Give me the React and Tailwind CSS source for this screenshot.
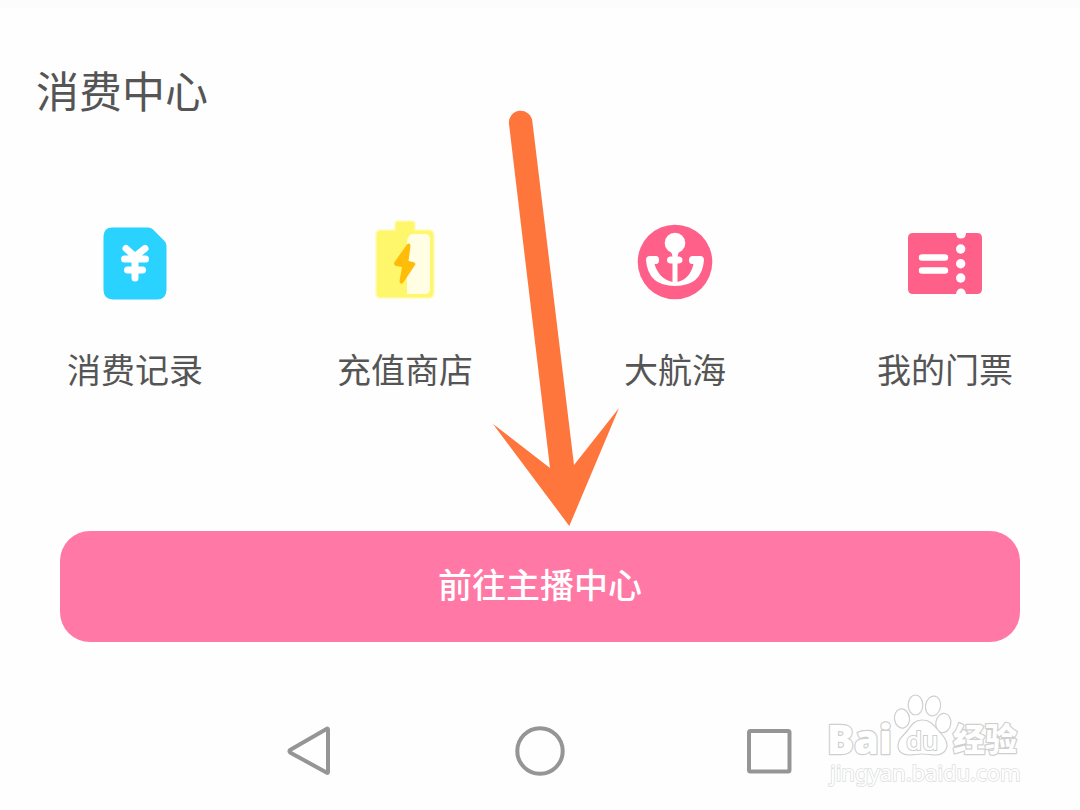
import React from "react";

function RecordIcon() {
  return (
    <svg viewBox="0 0 110 110" className="size-[110px]" aria-hidden="true">
      <path
        d="M32 22.500H68Q71 22.500 73 24.500L84.500 36Q86.500 38 86.500 41V85Q86 94.500 77 94.500H33Q23.500 94 23.500 85V31Q24 22.500 32 22.500Z"
        fill="#29d2ff"
      />
      <path
        d="M46 43.500L55 51.500L65 43.500M44.500 54H65.500M47.500 65H62.500M55 52V73"
        fill="none"
        stroke="#fff"
        strokeWidth="7"
        strokeLinecap="round"
        strokeLinejoin="round"
      />
    </svg>
  );
}

function BatteryIcon() {
  return (
    <svg viewBox="0 0 110 110" className="size-[110px]" aria-hidden="true">
      <path
        d="M48 16H62Q65 16 65 19V25H79Q84 25 84 30V87Q84 93 79 93H31Q26 93 26 88V30Q26 25 31 25H45V19Q45 16 48 16Z"
        fill="#fff76b"
        stroke="#fffbb5"
        strokeWidth="1.5"
      />
      <path d="M62 29H75Q80 29 80 34V84Q80 89 75 89H57V38Q57 31 62 29Z" fill="#fffee4" />
      <path
        d="M57 39.500L44.500 57Q43 60 46 61L52 62L49.500 76Q49.500 80 53 78L65 60Q66.500 58 63 57L58.500 56L60.500 41Q60 37 57 39.500Z"
        fill="#ffbc08"
      />
    </svg>
  );
}

function AnchorIcon() {
  return (
    <svg viewBox="0 0 110 110" className="size-[110px]" aria-hidden="true">
      <circle cx="55" cy="57" r="37.3" fill="#ff6089" />
      <circle cx="55" cy="38" r="10.3" fill="#fff" />
      <path
        d="M51 46H59L57.500 51.500H59Q62.500 52 62.500 55T59 58.500H57.500V77Q70 74 73.500 59H72Q69 59 69 55Q69 51 73 51H80Q84 51 84 55Q82 81 55 81Q28 81 26 55Q26 51 30 51H36Q39 51 39 55Q39 59 36 59H34.500Q39 74 52.500 77V58.500H50Q47 58 47 55T50 51.500H52.500Z"
        fill="#fff"
      />
    </svg>
  );
}

function TicketIcon() {
  return (
    <svg viewBox="0 0 110 110" className="size-[110px]" aria-hidden="true">
      <path
        d="M23 28H66Q66 33.500 71 33.500T76 28H87Q92 28 92 33V84Q92 89 87 89H76Q75 83.500 71 83.500T66 89H23Q18 89 18 84V33Q18 28 23 28Z"
        fill="#ff6089"
      />
      <path d="M32 52.500H55M32 65.500H55" stroke="#fff" strokeWidth="6.4" strokeLinecap="round" />
      <g fill="#fff">
        <circle cx="70.700" cy="44" r="4.700" />
        <circle cx="70.700" cy="58.700" r="4.700" />
        <circle cx="70.700" cy="73" r="4.700" />
      </g>
    </svg>
  );
}

const items = [
  { label: "消费记录", Icon: RecordIcon },
  { label: "充值商店", Icon: BatteryIcon },
  { label: "大航海", Icon: AnchorIcon },
  { label: "我的门票", Icon: TicketIcon },
];

function PointerArrow() {
  return (
    <svg
      viewBox="0 0 160 440"
      className="pointer-events-none absolute left-1/2 top-[100px] -ml-[60px] h-[440px] w-[160px]"
      aria-hidden="true"
    >
      <path
        d="M29 24A11.700 11.700 0 0 1 52.300 21L94 365L139 308L89.300 426L13 324L70 368Z"
        fill="#ff763d"
      />
    </svg>
  );
}

function Watermark() {
  return (
    <svg
      viewBox="0 0 230 120"
      className="pointer-events-none absolute bottom-[10px] right-[40px] h-[120px] w-[230px]"
      role="img"
      aria-label="Baidu 经验 jingyan.baidu.com"
    >
      <g fill="#fff" stroke="#cfcfcf" strokeWidth="1.2">
        <g
          strokeWidth="2.4"
          paintOrder="stroke"
          strokeLinejoin="round"
          className="font-['Noto_Sans','Noto_Sans_CJK_SC',sans-serif] font-black"
        >
          <text x="17" y="74" fontSize="40">Bai</text>
          <text x="143" y="71" fontSize="32">经验</text>
        </g>
        <ellipse cx="92" cy="38.500" rx="7.500" ry="9.700" transform="rotate(-8 92 38.500)" />
        <ellipse cx="105.500" cy="25" rx="7.300" ry="10" />
        <ellipse cx="123" cy="26" rx="7.500" ry="10" transform="rotate(10 123 26)" />
        <ellipse cx="133.300" cy="43" rx="7.500" ry="9.700" transform="rotate(10 133 43)" />
        <path d="M112 40C105 40 102 44 98 50C93 56 88 59 88 66C88 72 93 75 99 75C104 75 107 74 112 74C117 74 121 75 126 75C132 75 137 71 137 65C137 58 131 54 127 49C122 43 119 40 112 40Z" />
        <text
          x="96"
          y="70"
          fontSize="26"
          strokeWidth="2"
          paintOrder="stroke"
          className="font-['Noto_Sans',sans-serif] font-medium"
        >
          du
        </text>
        <text
          x="20"
          y="101"
          fontSize="22"
          strokeWidth="1.6"
          stroke="#dedede"
          paintOrder="stroke"
          className="font-['Noto_Sans',sans-serif]"
        >
          jingyan.baidu.com
        </text>
      </g>
    </svg>
  );
}

function SystemNav() {
  const buttonClass = "flex h-[50px] w-[230px] items-center justify-center";
  const iconProps = {
    viewBox: "0 0 50 50",
    className: "size-[50px]",
    fill: "none",
    stroke: "#959595",
    strokeWidth: 4,
    strokeLinejoin: "round",
    "aria-hidden": true,
  };
  return (
    <nav className="flex justify-center">
      <button type="button" aria-label="返回" className={buttonClass}>
        <svg {...iconProps}>
          <path d="M43 3.500V46Q43 47.500 41.500 46.500L5 26.500Q4 25 5 24L41.500 3Q43 2 43 3.500Z" />
        </svg>
      </button>
      <button type="button" aria-label="主页" className={buttonClass}>
        <svg {...iconProps}>
          <circle cx="25" cy="25" r="22.700" />
        </svg>
      </button>
      <button type="button" aria-label="最近任务" className={buttonClass}>
        <svg {...iconProps}>
          <rect x="4" y="5" width="40.500" height="40.500" rx="1.500" />
        </svg>
      </button>
    </nav>
  );
}

export default function App() {
  return (
    <div className="relative bg-[#fefefe] pb-[34px] font-['Noto_Sans_CJK_SC',sans-serif] text-[#555555]">
      <div className="h-2 bg-[#fcfcfc]" />
      <main>
        <h1 className="px-9 pt-[53px] text-[43px] leading-[56px]">消费中心</h1>
        <ul className="grid grid-cols-4 pt-[88px]">
          {items.map(({ label, Icon }) => (
            <li key={label}>
              <a href="#" className="flex flex-col items-center gap-[29px]">
                <Icon />
                <span className="text-[34px] leading-[50px]">{label}</span>
              </a>
            </li>
          ))}
        </ul>
        <div className="px-15 pb-[84px] pt-[137px]">
          <button
            type="button"
            className="h-[111px] w-full rounded-[30px] bg-[#ff78a6] pb-[6px] text-[34px] font-medium text-white"
          >
            前往主播中心
          </button>
        </div>
      </main>
      <SystemNav />
      <PointerArrow />
      <Watermark />
    </div>
  );
}
